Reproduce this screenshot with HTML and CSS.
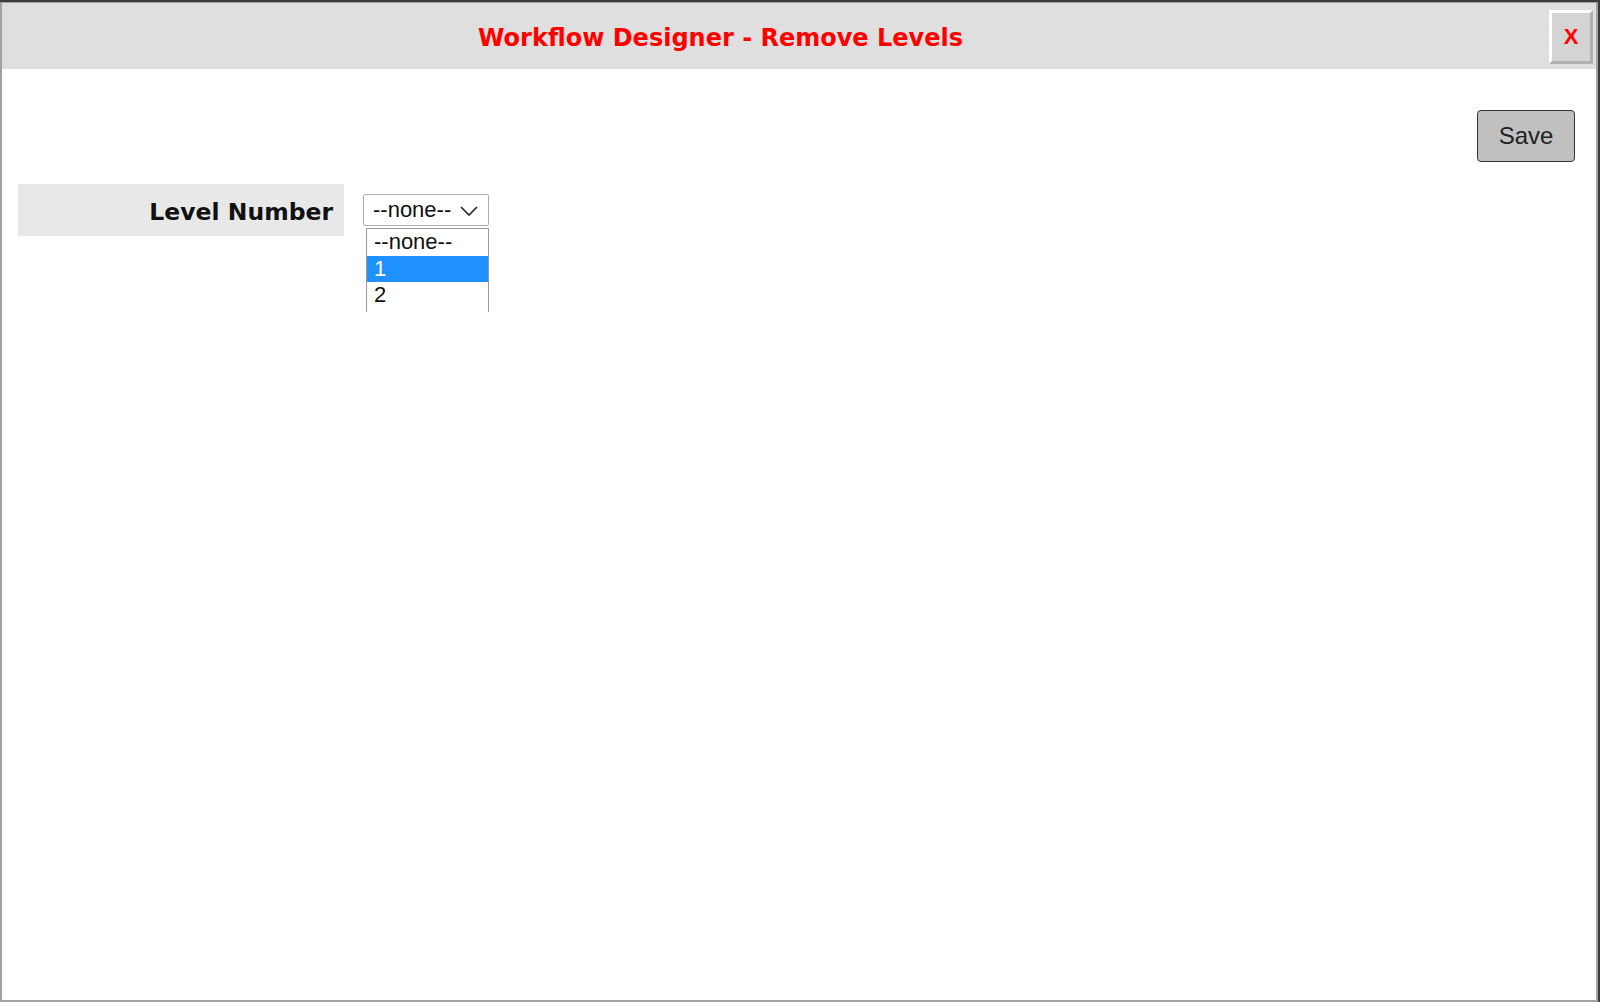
FILE: index.html
```html
<!DOCTYPE html>
<html lang="en">
<head>
    <meta charset="UTF-8">
    <meta name="viewport" content="width=device-width, initial-scale=1.0">
    <title>Workflow Designer - Remove Levels</title>
    <link rel="stylesheet" href="styles.css">
</head>
<body>

<div class="dialog">
    <div class="dialog-header">
        <div class="dialog-title">Workflow Designer - Remove Levels</div>
        <button class="close-button">X</button>
    </div>

    <div class="dialog-body">
        <div class="toolbar">
            <button class="save-button">Save</button>
        </div>

        <div class="form-row">
            <div class="form-label">Level Number</div>
            <div class="select-wrap">
                <div class="select-box">
                    <span>--none--</span>
                    <svg class="chevron" width="18" height="10" viewBox="0 0 18 10">
                        <path d="M1 1 L9 9 L17 1" fill="none" stroke="#222" stroke-width="1.6"/>
                    </svg>
                </div>
                <div class="select-list">
                    <div class="select-option">--none--</div>
                    <div class="select-option selected">1</div>
                    <div class="select-option">2</div>
                </div>
            </div>
        </div>
    </div>
</div>

</body>
</html>
```

FILE: styles.css
```css
html, body {
    margin: 0;
    height: 1002px;
    overflow: hidden;
}
body {
    background-color: #3c3c3c; /* page behind the dialog */
    font-family: 'Liberation Sans', Arial, sans-serif;
}
.dialog {
    box-sizing: border-box;
    width: 1598px;
    height: 1000px;
    margin: 2px 2px 0 0;
    border: 2px solid #a2a2a2;
    border-top-width: 1px;
    background-color: #fff;
    display: flex;
    flex-direction: column;
}
.dialog-header {
    height: 66px;
    background-color: #dfdfdf;
    display: flex;
    align-items: flex-start;
}
.dialog-title {
    flex: 1;
    padding-right: 110px;
    padding-top: 21px;
    text-align: center;
    color: #ff0000;
    font-family: 'DejaVu Sans', Verdana, sans-serif;
    font-weight: bold;
    font-size: 24px;
}
.close-button {
    box-sizing: border-box;
    width: 44px;
    height: 54px;
    margin: 7px 3px 0 0;
    padding: 0;
    background-color: #d4d4d4;
    border: 3px solid;
    border-color: #fff #b0b0b0 #b0b0b0 #fff;
    color: #ff0000;
    font-family: 'Liberation Sans', Arial, sans-serif;
    font-weight: bold;
    font-size: 22px;
}
.dialog-body {
    padding: 0 21px 0 16px;
}
.toolbar {
    display: flex;
    justify-content: flex-end;
    margin-top: 41px;
}
.save-button {
    box-sizing: border-box;
    width: 98px;
    height: 52px;
    background-color: #c0c0c0;
    border: 1px solid #333;
    border-radius: 4px;
    color: #222;
    font-family: 'Liberation Sans', Arial, sans-serif;
    font-size: 24px;
}
.form-row {
    display: flex;
    align-items: flex-start;
    margin-top: 22px;
}
.form-label {
    box-sizing: border-box;
    width: 326px;
    height: 52px;
    padding: 14px 11px 0 0;
    background-color: #e8e8e8;
    text-align: right;
    font-family: 'DejaVu Sans', Verdana, sans-serif;
    font-weight: bold;
    font-size: 23.5px;
    color: #111;
}
.select-wrap {
    position: relative;
    margin: 10px 0 0 19px;
}
.select-box {
    box-sizing: border-box;
    width: 126px;
    height: 32px;
    padding: 0 10px 0 9px;
    border: 1px solid #acacac;
    border-radius: 2px;
    display: flex;
    align-items: center;
    justify-content: space-between;
    font-size: 22px;
    color: #111;
}
.chevron {
    margin-top: 1px;
}
.select-list {
    position: absolute;
    top: 34px;
    left: 3px;
    box-sizing: border-box;
    width: 123px;
    height: 84px;
    overflow: hidden;
    background-color: #fff;
    border: 1px solid #9a9a9a;
    border-bottom: none;
}
.select-option {
    height: 27px;
    line-height: 26px;
    padding-left: 7px;
    font-size: 22px;
    color: #111;
}
.select-option.selected {
    height: 26px;
    line-height: 26px;
    background-color: #1e90ff;
    color: #fff;
}
```
